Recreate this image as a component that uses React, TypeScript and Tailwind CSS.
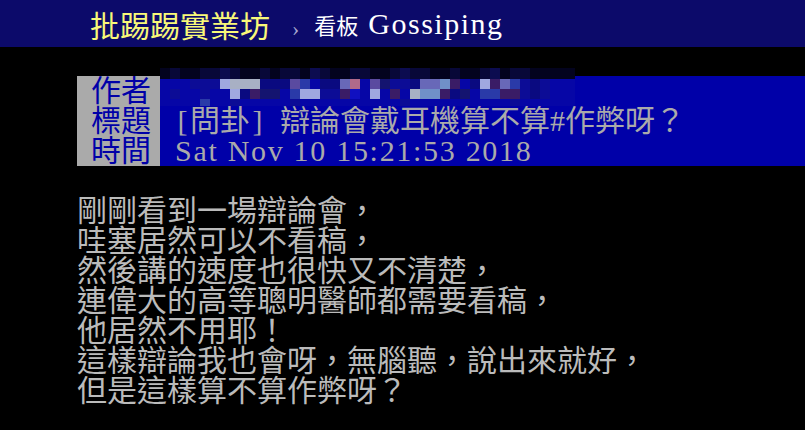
const palette: Record<string, string> = {
  k: "#03031e",
  K: "#080838",
  m: "#0c0c50",
  b: "#0606a6",
  B: "#0c0c96",
  d: "#0a0a80",
  D: "#141470",
  p: "#3a1c66",
  P: "#5a4aa0",
  l: "#a0a8e0",
  g: "#a8b0c4",
  c: "#7090c8",
  v: "#6868b8",
  r: "#b06a8a",
  n: "#2a3aa8",
  e: "#1010c0",
};

// censored author line, drawn as a mosaic
const mosaicRows = [
  { y: 0, h: 11, cells: "kKkkKKmKkkKkKKkmKkkKKkkKmKKkkKkkKmkKKkkkkk" },
  { y: 11, h: 10, cells: "bbbBBBlgggdddPnbddvrbPDBBdvvcpbdlpvnBdBbbb" },
  { y: 21, h: 10, cells: "bBbbBbbldpDDbnllBBpeblbpbgccpdDbnnppBdBbbb" },
  { y: 31, h: 7, cells: "bbbbnbbBbbbbbBbbbbbbbbbbBbbbbbbbbbbBbbbbbb" },
];

function Mosaic() {
  return (
    <svg
      width="415"
      height="38"
      viewBox="0 0 415 38"
      className="absolute left-0 top-[-8px]"
    >
      {mosaicRows.map((row) =>
        row.cells
          .split("")
          .map((c, i) => (
            <rect
              key={`${row.y}-${i}`}
              x={i * 10}
              y={row.y}
              width="10"
              height={row.h}
              fill={palette[c]}
            />
          ))
      )}
    </svg>
  );
}

// half-width cell, like the terminal grid
function H({ children }: { children?: React.ReactNode }) {
  return <span className="inline-block w-[15px] text-center">{children}</span>;
}

const lines = [
  "剛剛看到一場辯論會，",
  "哇塞居然可以不看稿，",
  "然後講的速度也很快又不清楚，",
  "連偉大的高等聰明醫師都需要看稿，",
  "他居然不用耶！",
  "這樣辯論我也會呀，無腦聽，說出來就好，",
  "但是這樣算不算作弊呀？",
];

export default function App() {
  return (
    <div className="w-[805px] h-[430px] bg-black overflow-hidden font-['Liberation_Serif','Noto_Sans_CJK_TC',serif]">
      <div className="h-[47px] bg-[#0c0a6a] flex items-center pl-[90px]">
        <span className="text-[30px] leading-[30px] text-[#f8f878] font-['Noto_Sans_CJK_TC',sans-serif]">
          批踢踢實業坊
        </span>
        <span className="ml-[22px] mt-[10px] text-[22px] leading-[22px] text-[#a8a8d0]">
          ›
        </span>
        <span className="ml-[15px] text-[22px] leading-[30px] text-white font-['Noto_Sans_CJK_TC',sans-serif]">
          看板
        </span>
        <span className="ml-[10px] text-[30px] leading-[30px] tracking-[1.5px] text-white">
          Gossiping
        </span>
      </div>

      <div className="mt-[29px] ml-[77px] text-[30px] leading-[30px]">
        <div className="flex h-[30px]">
          <div className="w-[83px] pl-[14px] bg-[#aaaaaa] text-[#0000a8]">作者</div>
          <div className="relative flex-1 bg-[#0000a8]">
            <Mosaic />
          </div>
        </div>
        <div className="flex h-[30px]">
          <div className="w-[83px] pl-[14px] bg-[#aaaaaa] text-[#0000a8]">標題</div>
          <div className="flex-1 pl-[15px] bg-[#0000a8] text-[#aaaaaa] whitespace-pre">
            <H>[</H>問卦<H>]</H>
            <H />
            辯論會戴耳機算不算<H>#</H>作弊呀？
          </div>
        </div>
        <div className="flex h-[30px]">
          <div className="w-[83px] pl-[14px] bg-[#aaaaaa] text-[#0000a8]">時間</div>
          <div className="flex-1 pl-[15px] bg-[#0000a8] text-[#aaaaaa] whitespace-pre tracking-[1.7px]">
            Sat Nov 10 15:21:53 2018
          </div>
        </div>
      </div>

      <div className="mt-[30px] ml-[77px] text-[30px] leading-[30px] text-[#bbbbbb]">
        {lines.map((l) => (
          <div key={l} className="h-[30px] whitespace-pre">
            {l}
          </div>
        ))}
      </div>
    </div>
  );
}
